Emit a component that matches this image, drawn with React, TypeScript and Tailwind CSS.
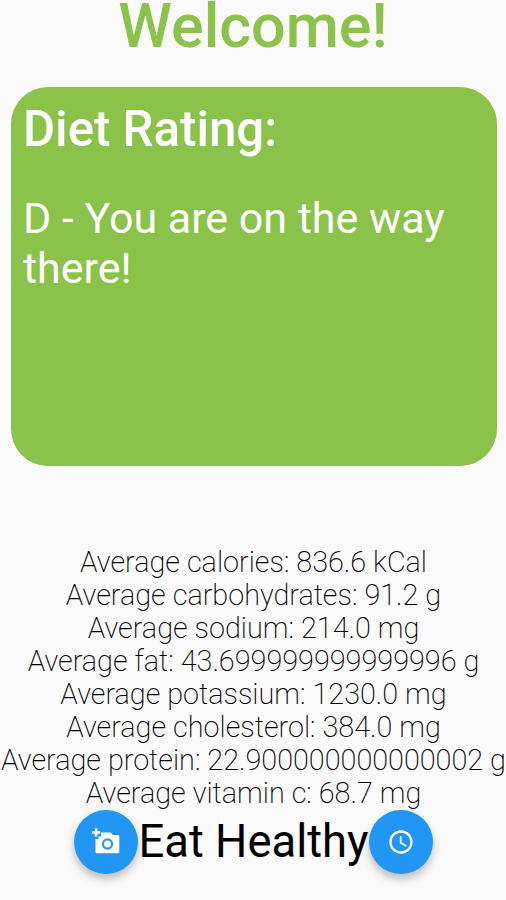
import { MdAccessTime } from "react-icons/md";

const averages = [
  "Average calories: 836.6 kCal",
  "Average carbohydrates: 91.2 g",
  "Average sodium: 214.0 mg",
  "Average fat: 43.699999999999996 g",
  "Average potassium: 1230.0 mg",
  "Average cholesterol: 384.0 mg",
  "Average protein: 22.900000000000002 g",
  "Average vitamin c: 68.7 mg",
];

// Filled camera with a plus sign at its top-left corner
function AddPhotoIcon() {
  return (
    <svg className="h-[26px] w-7" viewBox="0 0 28 26" fill="none">
      <path
        d="M9 7.5V4.5H18.5L20.8 7H26Q27.3 7 27.3 8.3V24Q27.3 25.3 26 25.3H4.8Q3.5 25.3 3.5 24V11H6.5V8.5H9Z"
        fill="white"
      />
      <path d="M4.1 0.6V8.6M0.1 4.6H8.1" stroke="white" strokeWidth="2.5" />
      <circle cx="15.5" cy="16" r="4.6" stroke="#2196f3" strokeWidth="2.1" />
    </svg>
  );
}

export default function App() {
  return (
    <main className="flex h-[900px] w-[506px] flex-col items-center overflow-hidden bg-[#fafafa] font-[Roboto,sans-serif]">
      <h1 className="h-[86.5px] shrink-0 whitespace-nowrap text-[61px] leading-[52px] font-medium text-[#8bc34a]">Welcome!</h1>
      <section className="ml-px h-[379.5px] w-[486px] shrink-0 rounded-[37px] bg-[#8bc34a] px-[12.5px] pt-[13.5px] text-white">
        <h2 className="text-[49.2px] leading-[58px] font-medium">Diet Rating:</h2>
        <p className="mt-[35px] text-[43px] leading-[50px]">D - You are on the way<br />there!</p>
      </section>
      <ul className="mt-[80px] ml-px flex flex-col items-center text-[28.8px] leading-[33px] font-extralight text-black">
        {averages.map((line) => <li key={line} className="whitespace-nowrap">{line}</li>)}
      </ul>
      <footer className="ml-px flex items-center">
        <button aria-label="Add photo" className="flex size-16 items-center justify-center rounded-full bg-[#2196f3] pb-0.5 text-white shadow-[0_5px_8px_rgba(0,0,0,0.25)]"><AddPhotoIcon /></button>
        <span className="whitespace-nowrap text-[45.4px] leading-[60px] text-black">Eat Healthy</span>
        <button aria-label="History" className="flex size-16 items-center justify-center rounded-full bg-[#2196f3] text-white shadow-[0_5px_8px_rgba(0,0,0,0.25)]"><MdAccessTime size={28} /></button>
      </footer>
    </main>
  );
}
